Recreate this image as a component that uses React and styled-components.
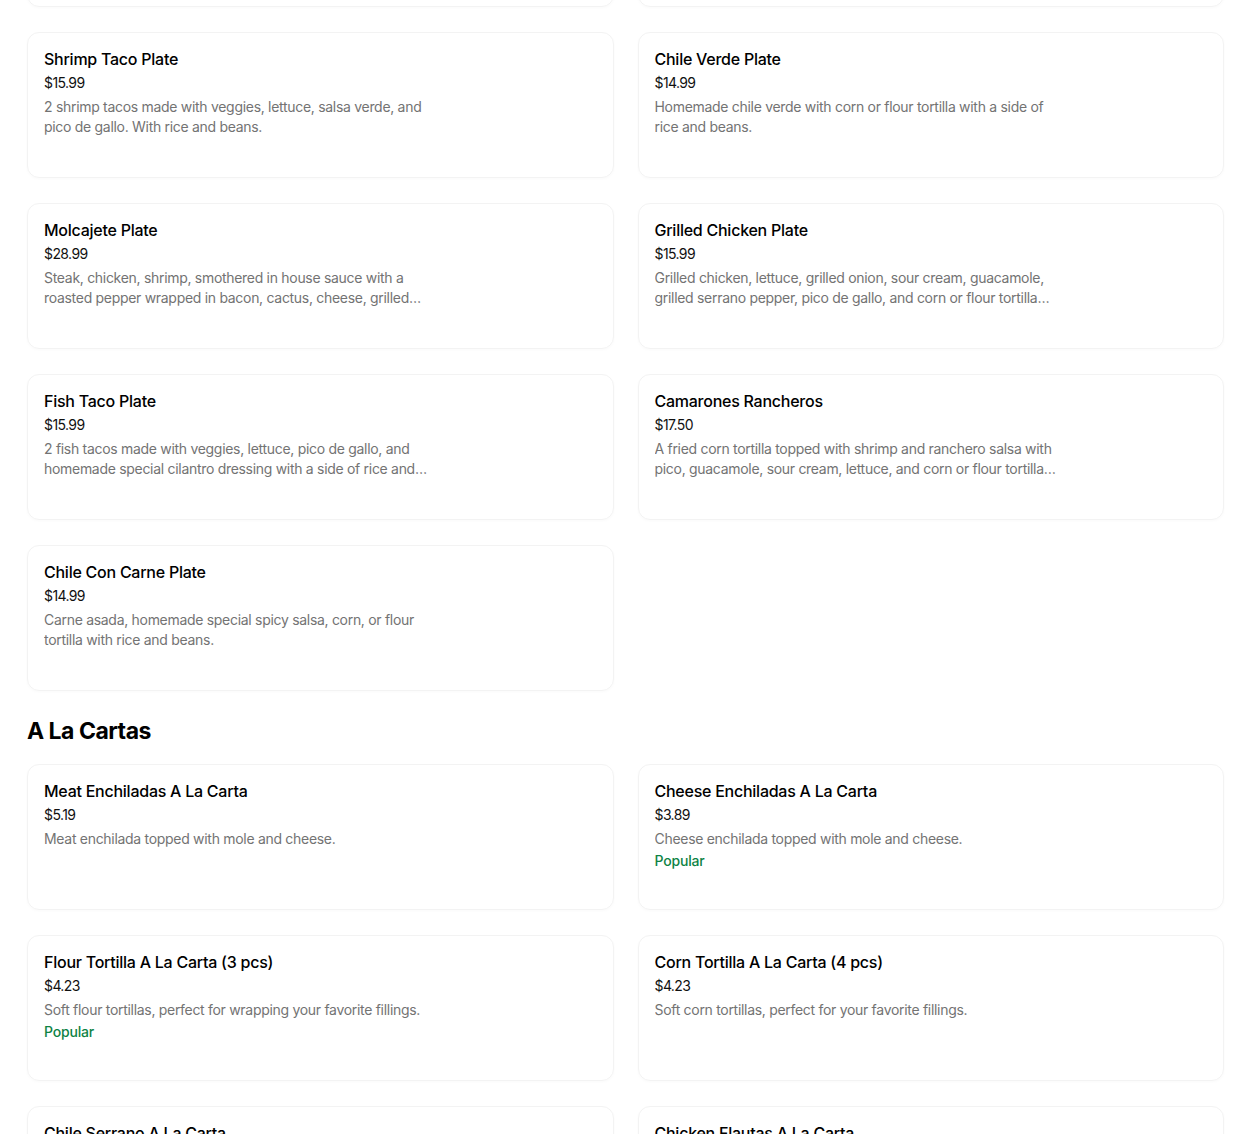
import styled, { createGlobalStyle } from 'styled-components'

const GlobalStyle = createGlobalStyle`
    html, body {
        margin: 0;
        padding: 0;
        background: #ffffff;
    }
    body {
        font-family: Inter, "Noto Sans", "Liberation Sans", sans-serif;
        color: #000000;
        overflow: hidden;
    }
`

// the menu is scrolled a little, so the previous row peeks in at the top
const Page = styled.div`
    padding: 0 26px 0 27px;
    margin-top: -139px;
`

const Section = styled.section`
    display: flex;
    flex-direction: column;
`

const SectionTitle = styled.h2`
    font-size: 23px;
    line-height: 32px;
    font-weight: 700;
    letter-spacing: -0.5px;
    margin: 24px 0 17px;
`

const Grid = styled.ul`
    list-style: none;
    margin: 0;
    padding: 0;
    display: grid;
    grid-template-columns: 1fr 1fr;
    column-gap: 24px;
    row-gap: 25px;
`

const Card = styled.li`
    box-sizing: border-box;
    height: 146px;
    padding: 16px;
    border: 1px solid #f3f3f3;
    border-radius: 12px;
    box-shadow: 0 1px 3px rgba(0, 0, 0, 0.025);
    display: flex;
    flex-direction: column;
`

const Name = styled.div`
    font-size: 16px;
    line-height: 20px;
    font-weight: 500;
    letter-spacing: -0.25px;
    color: #000000;
`

const Price = styled.div`
    margin-top: 4px;
    font-size: 14px;
    line-height: 20px;
    letter-spacing: -0.6px;
    color: #111111;
`

const Description = styled.div`
    margin-top: 4px;
    max-width: 405px;
    font-size: 14px;
    line-height: 20px;
    letter-spacing: -0.3px;
    color: #737373;
    display: -webkit-box;
    -webkit-line-clamp: 2;
    -webkit-box-orient: vertical;
    overflow: hidden;
`

const Badge = styled.div`
    margin-top: 2px;
    font-size: 14px;
    line-height: 20px;
    font-weight: 500;
    letter-spacing: -0.2px;
    color: #0e8345;
`

const plates = [
    { name: 'Steak Taco Plate', price: '$15.99', desc: '3 steak tacos with onion and cilantro. With rice and beans.' },
    { name: 'Chicken Taco Plate', price: '$14.99', desc: '3 chicken tacos with onion and cilantro. With rice and beans.' },
    { name: 'Shrimp Taco Plate', price: '$15.99', desc: '2 shrimp tacos made with veggies, lettuce, salsa verde, and pico de gallo. With rice and beans.' },
    { name: 'Chile Verde Plate', price: '$14.99', desc: 'Homemade chile verde with corn or flour tortilla with a side of rice and beans.' },
    { name: 'Molcajete Plate', price: '$28.99', desc: 'Steak, chicken, shrimp, smothered in house sauce with a roasted pepper wrapped in bacon, cactus, cheese, grilled onion, rice and beans.' },
    { name: 'Grilled Chicken Plate', price: '$15.99', desc: 'Grilled chicken, lettuce, grilled onion, sour cream, guacamole, grilled serrano pepper, pico de gallo, and corn or flour tortilla with rice and beans.' },
    { name: 'Fish Taco Plate', price: '$15.99', desc: '2 fish tacos made with veggies, lettuce, pico de gallo, and homemade special cilantro dressing with a side of rice and beans.' },
    { name: 'Camarones Rancheros', price: '$17.50', desc: 'A fried corn tortilla topped with shrimp and ranchero salsa with pico, guacamole, sour cream, lettuce, and corn or flour tortilla with rice and beans.' },
    { name: 'Chile Con Carne Plate', price: '$14.99', desc: 'Carne asada, homemade special spicy salsa, corn, or flour tortilla with rice and beans.' },
]

const aLaCartas = [
    { name: 'Meat Enchiladas A La Carta', price: '$5.19', desc: 'Meat enchilada topped with mole and cheese.' },
    { name: 'Cheese Enchiladas A La Carta', price: '$3.89', desc: 'Cheese enchilada topped with mole and cheese.', popular: true },
    { name: 'Flour Tortilla A La Carta (3 pcs)', price: '$4.23', desc: 'Soft flour tortillas, perfect for wrapping your favorite fillings.', popular: true },
    { name: 'Corn Tortilla A La Carta (4 pcs)', price: '$4.23', desc: 'Soft corn tortillas, perfect for your favorite fillings.' },
    { name: 'Chile Serrano A La Carta', price: '$1.50', desc: 'Grilled serrano pepper.' },
    { name: 'Chicken Flautas A La Carta', price: '$6.49', desc: 'Crispy rolled chicken flautas.' },
]

const MenuItem = ({ item }) => (
    <Card>
        <Name>{item.name}</Name>
        <Price>{item.price}</Price>
        <Description>{item.desc}</Description>
        {item.popular && <Badge>Popular</Badge>}
    </Card>
)

const App = () => {
    return (
        <Page>
            <GlobalStyle />
            <Section>
                <Grid>
                    {plates.map((item) => <MenuItem key={item.name} item={item} />)}
                </Grid>
            </Section>
            <Section>
                <SectionTitle>A La Cartas</SectionTitle>
                <Grid>
                    {aLaCartas.map((item) => <MenuItem key={item.name} item={item} />)}
                </Grid>
            </Section>
        </Page>
    )
}

export default App
